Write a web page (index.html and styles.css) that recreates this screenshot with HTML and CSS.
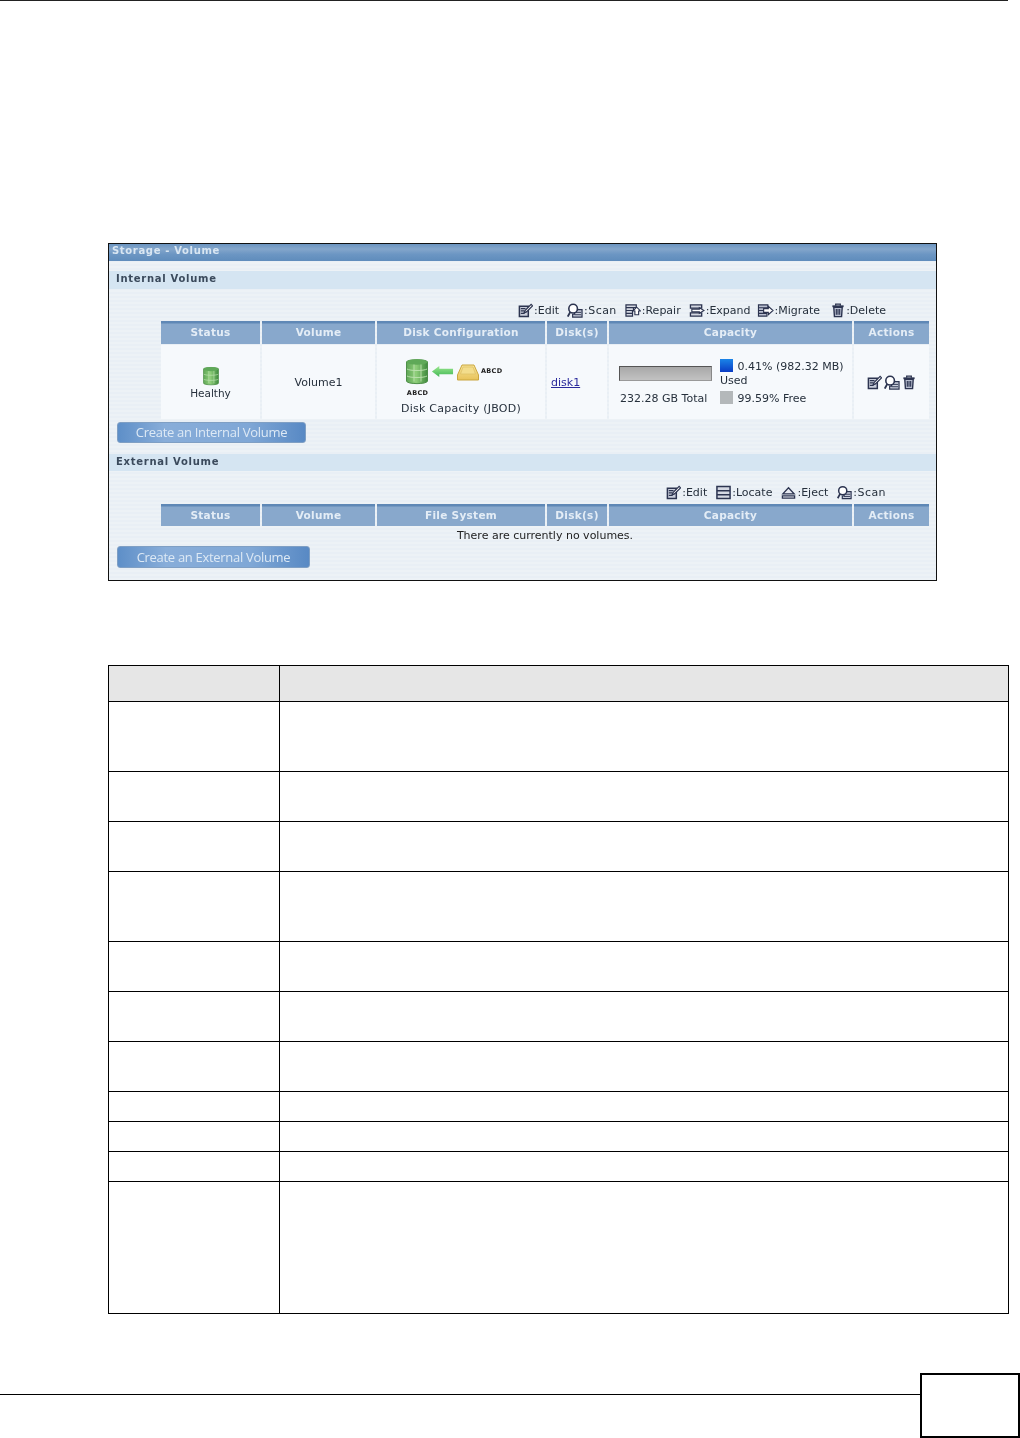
FILE: index.html
```html
<!DOCTYPE html>
<html lang="en">
<head>
<meta charset="utf-8">
<title>Storage - Volume</title>
<link rel="stylesheet" href="styles.css">
</head>
<body>
<svg class="defs" aria-hidden="true">
  <defs>
    <linearGradient id="g-green" x1="0" y1="0" x2="1" y2="0">
      <stop offset="0" stop-color="#5fa656"/><stop offset=".45" stop-color="#8fcf7a"/><stop offset="1" stop-color="#3f8a3e"/>
    </linearGradient>
    <linearGradient id="g-yellow" x1="0" y1="0" x2="0" y2="1">
      <stop offset="0" stop-color="#f7e49a"/><stop offset="1" stop-color="#e8c35a"/>
    </linearGradient>
    <linearGradient id="g-arrow" x1="0" y1="0" x2="0" y2="1">
      <stop offset="0" stop-color="#9be88f"/><stop offset="1" stop-color="#3fb653"/>
    </linearGradient>
    <symbol id="i-edit" viewBox="0 0 16 16">
      <path d="M1.500 3.500h9.500v11h-9.500z" fill="#c9cedb" stroke="#2c3450" stroke-width="1.600"/>
      <path d="M3 6h5M3 8.500h4M3 11h4" stroke="#2c3450" stroke-width="1.300"/>
      <path d="M6.500 10.500l1 -2.500 6.500 -6.500 1.500 1.500 -6.500 6.500z" fill="#fff" stroke="#2c3450" stroke-width="1.300"/>
    </symbol>
    <symbol id="i-scan" viewBox="0 0 17 16">
      <path d="M8 7h8v8h-10v-3h2z" fill="#c9cedb" stroke="#2c3450" stroke-width="1.300"/>
      <path d="M8 10h7M8 12.500h7" stroke="#2c3450"/>
      <circle cx="6.500" cy="6" r="4.600" fill="#fff" stroke="#2c3450" stroke-width="1.700"/>
      <path d="M3.500 9.500L.8 14.500" stroke="#2c3450" stroke-width="2"/>
    </symbol>
    <symbol id="i-repair" viewBox="0 0 17 16">
      <path d="M1 2h11v3h-11zM1 5h8v3h-8zM1 8h7v3h-7zM1 11h7v3h-7z" fill="#d4d8e2" stroke="#2c3450" stroke-width="1.300"/>
      <path d="M8.500 8.500l4 -4 4 4h-2v4h-4v-4z" fill="#fff" stroke="#2c3450" stroke-width="1.200"/>
    </symbol>
    <symbol id="i-expand" viewBox="0 0 17 16">
      <path d="M1.500 2h12v3.500h-12zM1.500 10.500h12v3.500h-12z" fill="#d4d8e2" stroke="#2c3450" stroke-width="1.400"/>
      <path d="M3 6.500h8v-1.500l5 3 -5 3v-1.500h-8z" fill="#fff" stroke="#2c3450" stroke-width="1.200"/>
    </symbol>
    <symbol id="i-migrate" viewBox="0 0 18 16">
      <path d="M1.500 2h10v3h-10zM1.500 5h9v3h-9zM1.500 8h9v3h-9zM1.500 11h9v3h-9z" fill="#b9bfd0" stroke="#2c3450" stroke-width="1.200"/>
      <path d="M7 6h5v-2.500l5 4.500 -5 4.500v-2.500h-5z" fill="#fff" stroke="#2c3450" stroke-width="1.200"/>
    </symbol>
    <symbol id="i-delete" viewBox="0 0 14 16">
      <path d="M1 3.500h12" stroke="#2c3450" stroke-width="2"/>
      <path d="M4.500 3V1.200h5V3" fill="none" stroke="#2c3450" stroke-width="1.300"/>
      <path d="M2.500 4.500h9l-.7 10h-7.600z" fill="#b9bfd0" stroke="#2c3450" stroke-width="1.500"/>
      <path d="M5.200 6.500v6M7 6.500v6M8.800 6.500v6" stroke="#2c3450" stroke-width="1.200"/>
    </symbol>
    <symbol id="i-locate" viewBox="0 0 16 16">
      <path d="M1 1.500h14v13h-14z" fill="#d4d8e2" stroke="#2c3450" stroke-width="1.600"/>
      <path d="M1 6h14M1 10.500h14" stroke="#2c3450" stroke-width="1.600"/>
    </symbol>
    <symbol id="i-eject" viewBox="0 0 16 16">
      <path d="M8 3l6 6.500h-12z" fill="#e8ebf2" stroke="#2c3450" stroke-width="1.400"/>
      <path d="M1.500 11.500h13v2.500h-13z" fill="#e8ebf2" stroke="#2c3450" stroke-width="1.400"/>
    </symbol>
    <symbol id="i-drum" viewBox="0 0 22 27">
      <path d="M.5 4C.5 1 21.500 1 21.500 4v19c0 3.500-21 3.500-21 0z" fill="url(#g-green)" stroke="#4e8f49"/>
      <ellipse cx="11" cy="4" rx="10.500" ry="2.800" fill="#5fa958"/>
      <path d="M1 11c3 2 17 2 20 0M1 18c3 2 17 2 20 0M8 6.500v17M15 6.500v17" fill="none" stroke="#bfe3b2" stroke-width=".9"/>
    </symbol>
    <symbol id="i-disk" viewBox="0 0 22 17">
      <path d="M5 1h12l4.500 10v5h-21v-5z" fill="url(#g-yellow)" stroke="#c9a63f"/>
      <path d="M6 3h10l2.500 7h-15z" fill="#f3dd8c" stroke="#dcbf63" stroke-width=".7"/>
    </symbol>
    <symbol id="i-arrow" viewBox="0 0 23 12">
      <path d="M0 6l8 -6v3h15v6h-15v3z" fill="url(#g-arrow)"/>
    </symbol>
  </defs>
</svg>

<div class="page">
  <div class="top-rule"></div>

  <section class="frame">
    <div class="soft">
      <h1 class="title-bar">Storage - Volume</h1>

      <h2 class="section section-internal">Internal Volume</h2>
      <div class="tools">
        <span class="tool"><svg class="ic w15"><use href="#i-edit"/></svg>:Edit</span>
        <span class="tool tool-scan"><svg class="ic w16"><use href="#i-scan"/></svg>:Scan</span>
        <span class="tool"><svg class="ic w16"><use href="#i-repair"/></svg>:Repair</span>
        <span class="tool"><svg class="ic w16"><use href="#i-expand"/></svg>:Expand</span>
        <span class="tool tool-migrate"><svg class="ic w17"><use href="#i-migrate"/></svg>:Migrate</span>
        <span class="tool tool-delete"><svg class="ic w14"><use href="#i-delete"/></svg>:Delete</span>
      </div>

      <div class="grid">
        <div class="head">Status</div>
        <div class="head">Volume</div>
        <div class="head">Disk Configuration</div>
        <div class="head">Disk(s)</div>
        <div class="head">Capacity</div>
        <div class="head">Actions</div>

        <div class="cell cell-status">
          <svg class="drum-small"><use href="#i-drum"/></svg>
          <span>Healthy</span>
        </div>
        <div class="cell">Volume1</div>
        <div class="cell cell-config">
          <div class="config-row">
            <div class="config-drum">
              <svg class="drum"><use href="#i-drum"/></svg>
              <span class="abcd">ABCD</span>
            </div>
            <svg class="arrow"><use href="#i-arrow"/></svg>
            <svg class="disk"><use href="#i-disk"/></svg>
            <span class="abcd abcd-right">ABCD</span>
          </div>
          <div class="config-label">Disk Capacity (JBOD)</div>
        </div>
        <div class="cell cell-disks"><a href="#" class="link">disk1</a></div>
        <div class="cell cell-capacity">
          <div class="cap-left">
            <div class="bar"></div>
            <div class="total">232.28 GB Total</div>
          </div>
          <div class="cap-right">
            <div class="legend-used"><i class="swatch swatch-blue"></i> 0.41% (982.32 MB)<br>Used</div>
            <div class="legend-free"><i class="swatch swatch-gray"></i> 99.59% Free</div>
          </div>
        </div>
        <div class="cell cell-actions">
          <svg class="ic w15"><use href="#i-edit"/></svg>
          <svg class="ic w16"><use href="#i-scan"/></svg>
          <svg class="ic w14"><use href="#i-delete"/></svg>
        </div>
      </div>

      <button class="btn btn-internal" type="button">Create an Internal Volume</button>

      <h2 class="section section-external">External Volume</h2>
      <div class="tools tools-ext">
        <span class="tool"><svg class="ic w15"><use href="#i-edit"/></svg>:Edit</span>
        <span class="tool"><svg class="ic w15"><use href="#i-locate"/></svg>:Locate</span>
        <span class="tool"><svg class="ic w15"><use href="#i-eject"/></svg>:Eject</span>
        <span class="tool tool-scan"><svg class="ic w15"><use href="#i-scan"/></svg>:Scan</span>
      </div>

      <div class="grid grid-ext">
        <div class="head">Status</div>
        <div class="head">Volume</div>
        <div class="head">File System</div>
        <div class="head">Disk(s)</div>
        <div class="head">Capacity</div>
        <div class="head">Actions</div>
        <div class="empty">There are currently no volumes.</div>
      </div>

      <button class="btn btn-external" type="button">Create an External Volume</button>
    </div>
  </section>

  <table class="params">
    <colgroup><col class="col-a"><col></colgroup>
    <tr class="r36 shade"><th></th><th></th></tr>
    <tr class="r70"><td></td><td></td></tr>
    <tr class="r50"><td></td><td></td></tr>
    <tr class="r50"><td></td><td></td></tr>
    <tr class="r70"><td></td><td></td></tr>
    <tr class="r50"><td></td><td></td></tr>
    <tr class="r50"><td></td><td></td></tr>
    <tr class="r50"><td></td><td></td></tr>
    <tr class="r30"><td></td><td></td></tr>
    <tr class="r30"><td></td><td></td></tr>
    <tr class="r30"><td></td><td></td></tr>
    <tr class="r132"><td></td><td></td></tr>
  </table>

  <footer class="foot">
    <div class="foot-rule"></div>
    <div class="foot-box"></div>
  </footer>
</div>
</body>
</html>
```
FILE: styles.css
```css
* { box-sizing: border-box; }
html, body { margin: 0; padding: 0; background: #fff; }
body { font-family: "DejaVu Sans", Verdana, sans-serif; color: #1a1a1a; overflow: hidden; }
.defs { position: absolute; width: 0; height: 0; }

.page { width: 1020px; height: 1438px; display: flex; flex-direction: column; }
.top-rule { height: 1px; margin-right: 12px; background: #222; flex: none; }

.frame {
  flex: none;
  margin: 242px 0 0 108px;
  width: 829px;
  height: 338px;
  border: 1px solid #111;
  overflow: hidden;
  background: repeating-linear-gradient(180deg, #e9eff5 0, #e9eff5 2px, #edf2f6 2px, #edf2f6 4px);
}
.soft { filter: blur(0.35px); }

.title-bar {
  margin: 0;
  height: 17px;
  padding-left: 3px;
  font-size: 10px;
  line-height: 14px;
  font-weight: bold;
  letter-spacing: .66px;
  color: #d9e6f2;
  background: linear-gradient(180deg, #6b94c0 0, #84a6cb 30%, #6c96c3 60%, #5f8cbc 100%);
}
.section {
  margin: 0;
  padding-left: 7px;
  font-size: 10px;
  font-weight: bold;
  letter-spacing: .72px;
  color: #3b4a5c;
  background: #d5e5f2;
}
.section-internal { margin-top: 10px; height: 18px; line-height: 16px; }
.section-external { margin-top: 11px; height: 17px; line-height: 15px; }

.tools {
  margin-top: 13px;
  height: 16px;
  padding-right: 50px;
  display: flex;
  justify-content: flex-end;
  align-items: center;
  gap: 8px;
  font-size: 11px;
  color: #26303c;
}
.tools-ext { gap: 9px; }
.tool { display: flex; align-items: center; gap: 1px; }
.tool-scan { letter-spacing: .45px; }
.tool-migrate { margin-left: -2px; }
.tool-delete { margin-left: 3px; }
.ic { height: 15px; flex: none; }
.w14 { width: 14px; }
.w15 { width: 15px; }
.w16 { width: 16px; }
.w17 { width: 17px; }

.grid {
  margin: 3px 0 0 52px;
  width: 768px;
  display: grid;
  grid-template-columns: 99px 113px 168px 60px 243px 75px;
  grid-template-rows: 23px 74px;
  column-gap: 2px;
  row-gap: 1px;
}
.grid-ext { margin-top: 4px; grid-template-rows: 22px 20px; row-gap: 0; }
.head {
  display: flex;
  align-items: flex-start;
  justify-content: center;
  padding-top: 4px;
  font-size: 10.500px;
  line-height: 14px;
  font-weight: bold;
  letter-spacing: .3px;
  color: #e4edf6;
  background: linear-gradient(180deg, #5f88b6 0, #5f88b6 2px, #88a8cc 3px, #88a8cc 100%);
}
.cell {
  display: flex;
  align-items: center;
  justify-content: center;
  font-size: 11px;
  color: #26303c;
  background: #f6f9fc;
}
.cell-status { flex-direction: column; gap: 1px; padding-top: 1px; font-size: 10.500px; }
.drum-small { width: 16px; height: 20px; }
.cell-config { flex-direction: column; align-items: flex-start; padding: 13px 0 0 24px; justify-content: flex-start; }
.config-row { display: flex; align-items: flex-start; height: 43px; margin-left: 4px; }
.config-drum { width: 24px; display: flex; flex-direction: column; align-items: center; }
.drum { width: 22px; height: 27px; }
.abcd { font-size: 6.500px; font-weight: bold; letter-spacing: .3px; color: #222; margin-top: 4px; margin-left: 1px; }
.arrow { width: 23px; height: 11px; margin: 8px 0 0 2px; }
.disk { width: 22px; height: 17px; margin: 6px 0 0 3px; }
.abcd-right { margin: 9px 0 0 2px; }
.config-label { margin-top: 1px; white-space: nowrap; letter-spacing: .25px; }
.cell-disks { justify-content: flex-start; padding-left: 4px; }
.link { color: #2a2a9c; text-decoration: underline; }
.cell-capacity { justify-content: flex-start; padding-left: 10px; align-items: flex-start; }
.cap-left { width: 101px; padding-top: 21px; }
.bar {
  width: 93px;
  height: 15px;
  border: 1px solid #555;
  border-right-color: #888;
  border-bottom-color: #999;
  background: linear-gradient(180deg, #a8a8a8, #c2c2c2);
}
.total { margin: 11px 0 0 1px; white-space: nowrap; line-height: 13px; }
.cap-right { padding-top: 14px; line-height: 14px; white-space: nowrap; }
.legend-free { margin-top: 3px; }
.swatch { display: inline-block; width: 13px; height: 13px; vertical-align: -2px; margin-right: 1px; }
.swatch-blue { background: linear-gradient(180deg, #1a84e8, #0a3cc4); }
.swatch-gray { background: #b4b8ba; }
.cell-actions { gap: 2px; }

.empty {
  grid-column: 1 / -1;
  display: flex;
  align-items: flex-start;
  justify-content: center;
  padding-top: 3px;
  font-size: 11px;
  line-height: 14px;
  color: #222;
}

.btn {
  display: block;
  margin: 3px 0 0 8px;
  height: 21px;
  padding: 0;
  border: 1px solid #7f9fc4;
  border-radius: 3px;
  font-family: "Open Sans", "Liberation Sans", sans-serif;
  font-size: 13px;
  letter-spacing: -.3px;
  color: #dde9f5;
  background: linear-gradient(90deg, #5e8fc8 0, #88add9 25%, #7fa7d6 70%, #5889c4 100%);
}
.btn-internal { width: 189px; padding-bottom: 2px; }
.btn-external { width: 193px; height: 22px; margin-top: 0; }

.params {
  flex: none;
  margin: 84px 0 0 108px;
  width: 901px;
  height: 649px;
  table-layout: fixed;
  border-collapse: collapse;
}
.col-a { width: 171px; }
.params th, .params td { border: 1px solid #000; padding: 0; }
.shade { background: #e6e6e6; }
.r30 { height: 30px; }
.r36 { height: 36px; }
.r50 { height: 50px; }
.r70 { height: 70px; }
.r132 { height: 132px; }

.foot { flex: none; margin-top: 59px; display: flex; align-items: flex-start; }
.foot-rule { flex: 1; height: 1px; margin-top: 21px; background: #000; }
.foot-box { width: 100px; height: 65px; border: 2px solid #000; }
```
